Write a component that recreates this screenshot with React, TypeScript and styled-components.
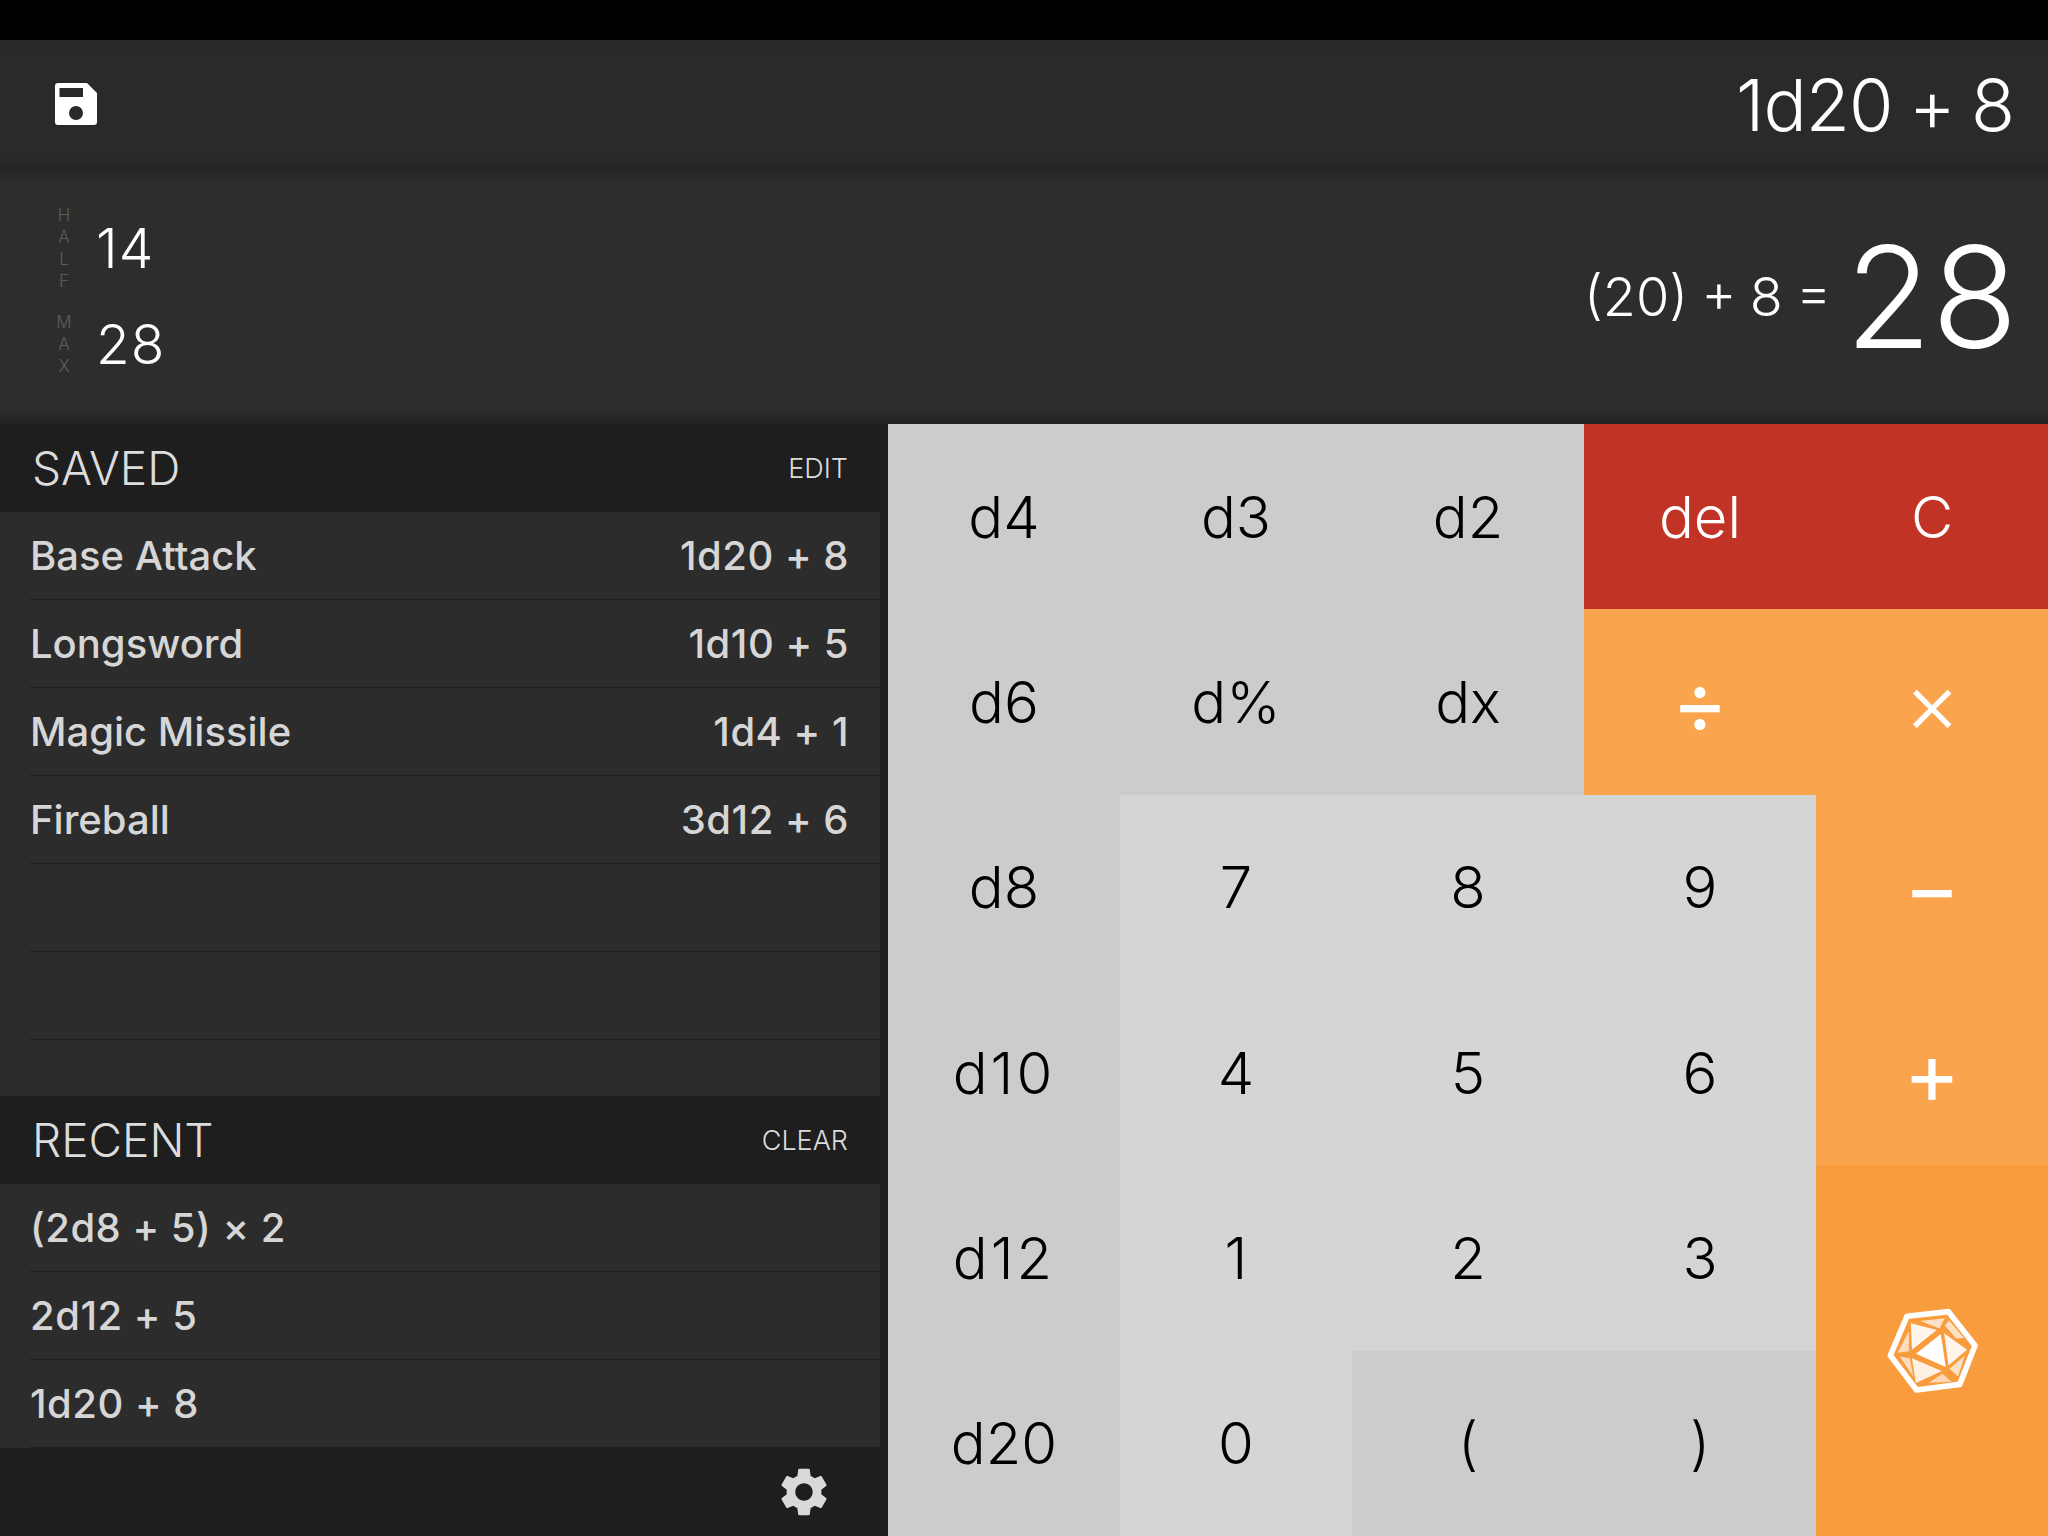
import { FC } from 'react'
import { MdSettings } from 'react-icons/md'
import styled, { createGlobalStyle } from 'styled-components'

const GlobalStyle = createGlobalStyle`
  html, body {
    margin: 0;
    padding: 0;
    background: #000;
  }
  * {
    box-sizing: border-box;
  }
  body {
    font-family: Inter, 'Liberation Sans', sans-serif;
  }
`

const Screen = styled.div`
  width: 2048px;
  height: 1536px;
  display: flex;
  flex-direction: column;
  overflow: hidden;
  background: #000;
`

const StatusBar = styled.div`
  height: 40px;
  flex: none;
  background: #000;
`

const Toolbar = styled.header`
  height: 128px;
  flex: none;
  display: flex;
  align-items: center;
  justify-content: space-between;
  padding: 0 34px 0 55px;
  background: linear-gradient(#272727, #2a2a2a 12px, #2a2a2a calc(100% - 14px), #252525);
`

const Expression = styled.div`
  font-size: 72px;
  font-weight: 300;
  color: #fff;
  letter-spacing: -1px;
  word-spacing: -3px;
`

const ResultBar = styled.section`
  height: 256px;
  flex: none;
  display: flex;
  align-items: center;
  justify-content: space-between;
  padding: 0 30px 0 55px;
  background: linear-gradient(#262626, #2d2d2d 16px, #2d2d2d calc(100% - 16px), #212121);
`

const Bounds = styled.div`
  display: flex;
  flex-direction: column;
  gap: 16px;
`

const Bound = styled.div`
  display: flex;
  align-items: center;
  gap: 23px;
  height: 80px;
`

const BoundLabel = styled.div`
  width: 18px;
  display: flex;
  flex-direction: column;
  align-items: center;
  font-size: 17px;
  line-height: 22px;
  font-weight: 300;
  color: #5e5e5e;
`

const BoundValue = styled.div`
  font-size: 55px;
  font-weight: 300;
  color: #fff;
  letter-spacing: 1px;
`

const Outcome = styled.div`
  display: flex;
  align-items: center;
  gap: 14px;
  color: #fff;
  font-weight: 300;
`

const Breakdown = styled.span`
  font-size: 54px;
  word-spacing: -2px;
`

const Total = styled.span`
  font-size: 141px;
`

const Main = styled.main`
  flex: 1;
  min-height: 0;
  display: flex;
`

const Sidebar = styled.aside`
  width: 888px;
  flex: none;
  display: flex;
  flex-direction: column;
  background: #1e1e1e;
`

const SectionHead = styled.div`
  height: 88px;
  flex: none;
  display: flex;
  align-items: center;
  justify-content: space-between;
  padding: 0 40px 0 32px;
`

const SectionTitle = styled.div`
  font-size: 46px;
  font-weight: 300;
  color: #dcdcdc;
`

const SectionAction = styled.div`
  font-size: 27px;
  font-weight: 300;
  color: #dcdcdc;
`

const List = styled.div<{ $height: number }>`
  height: ${(props) => props.$height}px;
  flex: none;
  width: 880px;
  background: #2c2c2c;
`

const Row = styled.div`
  height: 88px;
  margin-left: 30px;
  padding-right: 31px;
  display: flex;
  align-items: center;
  justify-content: space-between;
  border-bottom: 1px solid #1e1e1e;
  font-size: 40px;
  font-weight: 500;
  color: #d6d6d6;
`

const Formula = styled.span`
  letter-spacing: 0.5px;
`

const Footer = styled.div`
  flex: 1;
  display: flex;
  align-items: center;
  justify-content: flex-end;
  padding-right: 55px;
  color: #d9d9d9;
`

const Keypad = styled.div`
  flex: 1;
  display: grid;
  grid-template-columns: repeat(5, 232px);
  grid-template-rows: repeat(6, 1fr);
`

type Tone = 'die' | 'digit' | 'clear' | 'op' | 'roll'

const toneColors: Record<Tone, { bg: string; fg: string }> = {
  die: { bg: '#cccccc', fg: '#000' },
  digit: { bg: '#d5d5d5', fg: '#000' },
  clear: { bg: '#c13425', fg: '#fff' },
  op: { bg: '#fba44e', fg: '#fff' },
  roll: { bg: '#f89c3e', fg: '#fff' },
}

const Key = styled.div<{ $tone: Tone; $tracking?: number; $weight?: number }>`
  display: flex;
  align-items: center;
  justify-content: center;
  font-size: ${(props) => (props.$tone === 'op' ? 86 : 58)}px;
  font-weight: ${(props) => props.$weight ?? (props.$tone === 'op' ? 400 : 350)};
  letter-spacing: ${(props) => props.$tracking ?? 0}px;
  background: ${(props) => toneColors[props.$tone].bg};
  color: ${(props) => toneColors[props.$tone].fg};
`

const RollKey = styled(Key)`
  grid-column: 5;
  grid-row: 5 / span 2;
`

const SaveIcon: FC = () => (
  <svg width="42" height="42" viewBox="0 0 42 42" fill="#fff">
    <path
      fillRule="evenodd"
      d="M3 0H32L42 10V39A3 3 0 0 1 39 42H3A3 3 0 0 1 0 39V3A3 3 0 0 1 3 0ZM4.500 5V14H28V5ZM21 23A7 7 0 1 0 21 37A7 7 0 1 0 21 23Z"
    />
  </svg>
)

// coordinates taken from a 3x crop of the die, hence the odd viewBox
const dieFaces: [string, number][] = [
  ['358,211 432,203 416,234', 0.7],
  ['330,218 408,238 333,298', 0.9],
  ['420,250 345,310 435,350', 1],
  ['430,248 499,298 443,345', 0.9],
  ['432,225 445,210 490,262 466,264', 0.7],
  ['324,241 324,302 290,307', 0.65],
  ['296,318 327,323 337,378', 0.65],
  ['333,323 423,362 345,398', 0.85],
  ['383,397 425,370 452,394', 0.6],
  ['492,316 472,378 446,355', 0.7],
]

const DieIcon: FC = () => (
  <svg width="103" height="93" viewBox="240 160 310 280">
    <polygon
      points="318,197 443,183 523,285 477,402 347,419 268,315"
      fill="none"
      stroke="#fff"
      strokeWidth="17"
      strokeLinejoin="round"
    />
    {dieFaces.map(([points, opacity]) => (
      <polygon key={points} points={points} fill="#fff" opacity={opacity} />
    ))}
  </svg>
)

const saved = [
  ['Base Attack', '1d20 + 8'],
  ['Longsword', '1d10 + 5'],
  ['Magic Missile', '1d4 + 1'],
  ['Fireball', '3d12 + 6'],
  ['', ''],
  ['', ''],
]

const recent = ['(2d8 + 5) × 2', '2d12 + 5', '1d20 + 8']

const keys: { label: string; tone: Tone; tracking?: number; weight?: number }[] = [
  { label: 'd4', tone: 'die' },
  { label: 'd3', tone: 'die' },
  { label: 'd2', tone: 'die' },
  { label: 'del', tone: 'clear' },
  { label: 'C', tone: 'clear' },
  { label: 'd6', tone: 'die' },
  { label: 'd%', tone: 'die' },
  { label: 'dx', tone: 'die' },
  { label: '÷', tone: 'op' },
  { label: '×', tone: 'op', weight: 300 },
  { label: 'd8', tone: 'die' },
  { label: '7', tone: 'digit' },
  { label: '8', tone: 'digit' },
  { label: '9', tone: 'digit' },
  { label: '−', tone: 'op' },
  { label: 'd10', tone: 'die', tracking: 3 },
  { label: '4', tone: 'digit' },
  { label: '5', tone: 'digit' },
  { label: '6', tone: 'digit' },
  { label: '+', tone: 'op' },
  { label: 'd12', tone: 'die', tracking: 3 },
  { label: '1', tone: 'digit' },
  { label: '2', tone: 'digit' },
  { label: '3', tone: 'digit' },
  { label: 'd20', tone: 'die' },
  { label: '0', tone: 'digit' },
  { label: '(', tone: 'die' },
  { label: ')', tone: 'die' },
]

const BoundRow: FC<{ label: string; value: string }> = ({ label, value }) => (
  <Bound>
    <BoundLabel>
      {label.split('').map((letter) => (
        <span key={letter}>{letter}</span>
      ))}
    </BoundLabel>
    <BoundValue>{value}</BoundValue>
  </Bound>
)

const App: FC = () => (
  <Screen>
    <GlobalStyle />
    <StatusBar />
    <Toolbar>
      <SaveIcon />
      <Expression>1d20 + 8</Expression>
    </Toolbar>
    <ResultBar>
      <Bounds>
        <BoundRow label="HALF" value="14" />
        <BoundRow label="MAX" value="28" />
      </Bounds>
      <Outcome>
        <Breakdown>(20) + 8 =</Breakdown>
        <Total>28</Total>
      </Outcome>
    </ResultBar>
    <Main>
      <Sidebar>
        <SectionHead>
          <SectionTitle>SAVED</SectionTitle>
          <SectionAction>EDIT</SectionAction>
        </SectionHead>
        <List $height={584}>
          {saved.map(([name, formula], i) => (
            <Row key={i}>
              <span>{name}</span>
              <Formula>{formula}</Formula>
            </Row>
          ))}
        </List>
        <SectionHead>
          <SectionTitle>RECENT</SectionTitle>
          <SectionAction>CLEAR</SectionAction>
        </SectionHead>
        <List $height={264}>
          {recent.map((formula) => (
            <Row key={formula}>
              <Formula>{formula}</Formula>
            </Row>
          ))}
        </List>
        <Footer>
          <MdSettings size={58} />
        </Footer>
      </Sidebar>
      <Keypad>
        {keys.map((key) => (
          <Key key={key.label} $tone={key.tone} $tracking={key.tracking} $weight={key.weight}>
            {key.label}
          </Key>
        ))}
        <RollKey $tone="roll">
          <DieIcon />
        </RollKey>
      </Keypad>
    </Main>
  </Screen>
)

export default App
